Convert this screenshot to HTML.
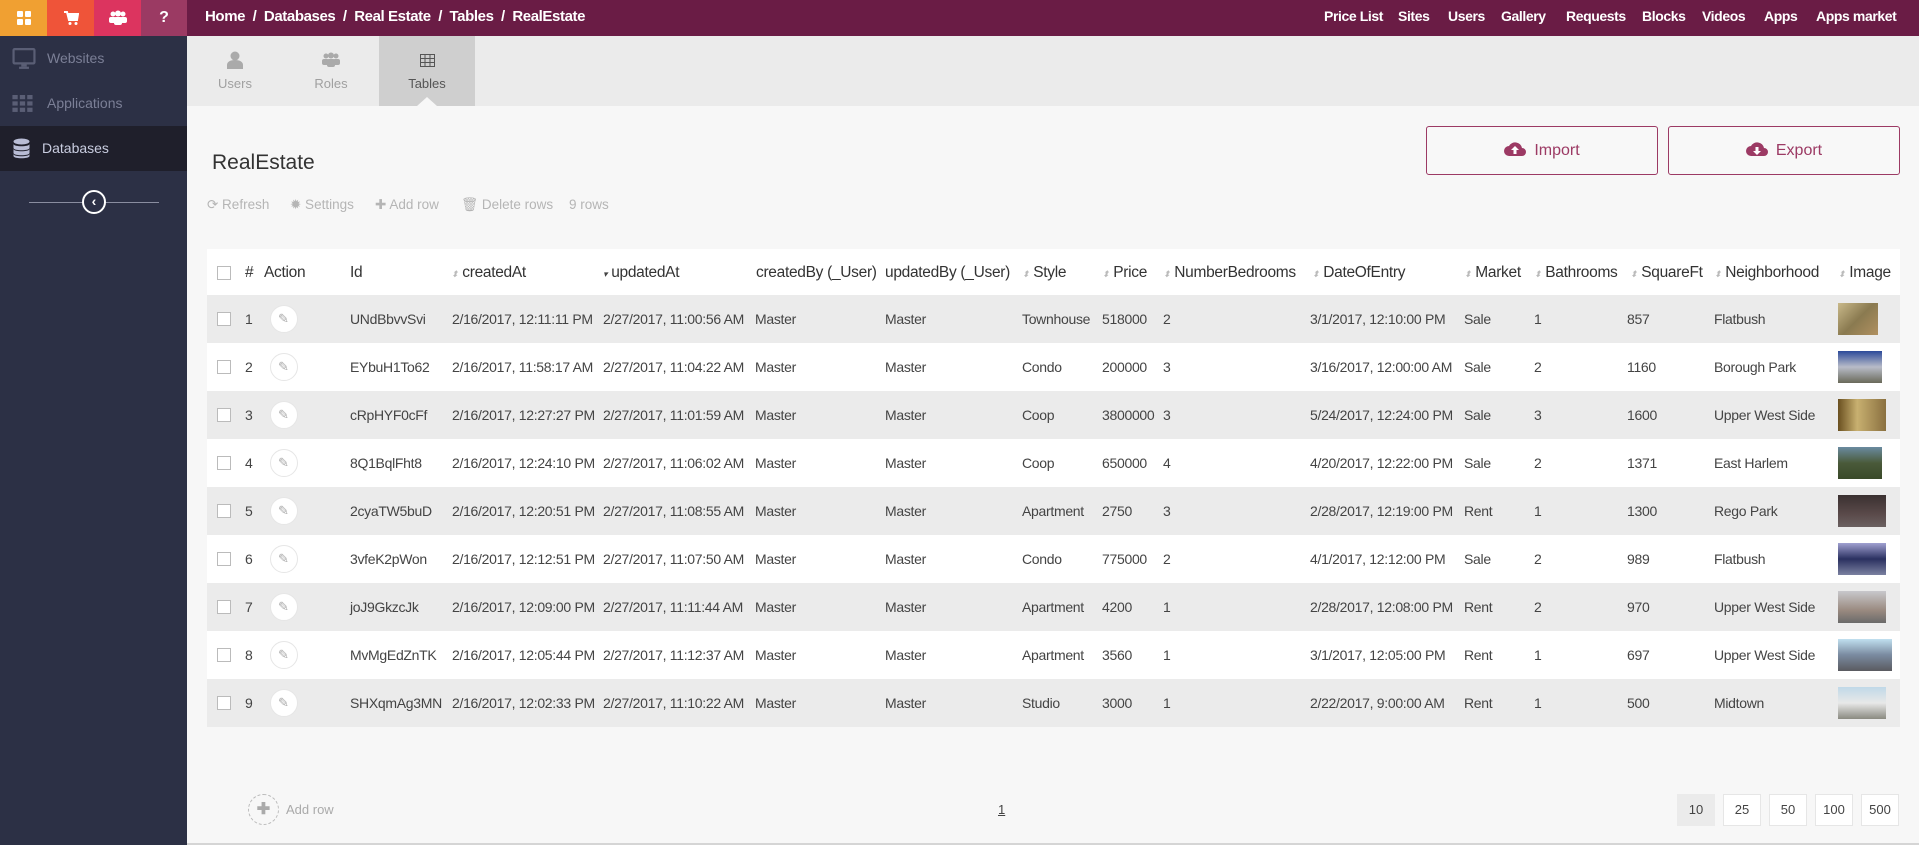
<!DOCTYPE html>
<html><head><meta charset="utf-8"><style>
*{box-sizing:border-box;margin:0;padding:0}
body{width:1919px;height:845px;overflow:hidden;background:#f7f7f7;font-family:"Liberation Sans",sans-serif;color:#444;position:relative}
.abs{position:absolute}
#top{left:0;top:0;width:1919px;height:36px;background:#6a1c45}
.ti{top:0;width:47px;height:36px;color:#fff;font-weight:bold;font-size:16px;text-align:center;line-height:36px}
.nav{top:0;line-height:33px;color:#fff;font-weight:bold;font-size:14px;letter-spacing:-0.4px;white-space:nowrap}
#side{left:0;top:36px;width:187px;height:809px;background:#2c3045}
.si{left:0;width:187px;height:45px;color:#7b7f96;font-size:14px;line-height:45px;padding-left:47px}
#tabs{left:187px;top:36px;width:1732px;height:70px;background:#ebebeb}
.tab{top:36px;width:96px;height:70px;text-align:center;color:#a0a0a0;font-size:13px}
.tab span{position:absolute;left:0;right:0;top:40px}
.row{left:207px;width:1693px;height:48px;font-size:14px;letter-spacing:-0.3px;line-height:48px;color:#444}
.row span{position:absolute;top:0;white-space:nowrap}
.hd span{font-size:15.5px;color:#333}
.cb{width:14px;height:14px;border:1px solid #bbb;background:#fff;top:17px!important}
.ed{width:28px;height:28px;border-radius:50%;background:#fff;top:10px!important;border:1px solid #e6e6e6}
.ed::after{content:"✎";position:absolute;left:7px;top:-11px;color:#aaa;font-size:13px}
.th{width:40px;height:32px;top:8px!important}
.sort{color:#bbb;font-size:9px}
.btn{top:126px;width:232px;height:49px;border:1px solid #9c3a64;border-radius:3px;color:#9c3a64;font-size:16px;text-align:center;line-height:47px;background:#f8f8f8}
.tb{top:197px;font-size:13.5px;color:#b5b5b5;white-space:nowrap}
.pg{top:794px;width:38px;height:32px;background:#fff;border:1px solid #e6e6e6;font-size:13px;text-align:center;line-height:30px;color:#444}
</style></head><body>
<div id="top" class="abs"></div>
<div class="abs ti" style="left:0;background:#f0a032"><svg width="16" height="16" viewBox="0 0 16 16" style="margin-top:10px"><rect x="1" y="1" width="6" height="6" rx="1" fill="#fff"/><rect x="9" y="1" width="6" height="6" rx="1" fill="#fff"/><rect x="1" y="9" width="6" height="6" rx="1" fill="#fff"/><rect x="9" y="9" width="6" height="6" rx="1" fill="#fff"/></svg></div>
<div class="abs ti" style="left:47px;background:#ef5439"><svg width="16" height="16" viewBox="0 0 16 16" style="margin-top:10px"><path d="M1 2h3l2 8h8l1-6H5" stroke="#fff" stroke-width="2" fill="#fff"/><circle cx="7" cy="13.5" r="1.5" fill="#fff"/><circle cx="13" cy="13.5" r="1.5" fill="#fff"/></svg></div>
<div class="abs ti" style="left:94px;background:#dc345f"><svg width="18" height="16" viewBox="0 0 18 16" style="margin-top:10px"><circle cx="4" cy="4" r="2.5" fill="#fff"/><circle cx="9" cy="3.5" r="3" fill="#fff"/><circle cx="14" cy="4" r="2.5" fill="#fff"/><rect x="0" y="7" width="7" height="6" rx="2" fill="#fff"/><rect x="11" y="7" width="7" height="6" rx="2" fill="#fff"/><rect x="5" y="7" width="8" height="8" rx="2" fill="#fff"/></svg></div>
<div class="abs ti" style="left:141px;background:#9b3a63;width:46px">?</div>
<div class="abs nav" style="left:205px;font-size:15px">Home&nbsp; / &nbsp;Databases&nbsp; / &nbsp;Real Estate&nbsp; / &nbsp;Tables&nbsp; / &nbsp;RealEstate</div>
<div class="abs nav" style="left:1324px">Price List</div>
<div class="abs nav" style="left:1398px">Sites</div>
<div class="abs nav" style="left:1448px">Users</div>
<div class="abs nav" style="left:1501px">Gallery</div>
<div class="abs nav" style="left:1566px">Requests</div>
<div class="abs nav" style="left:1642px">Blocks</div>
<div class="abs nav" style="left:1702px">Videos</div>
<div class="abs nav" style="left:1764px">Apps</div>
<div class="abs nav" style="left:1816px">Apps market</div>

<div id="side" class="abs"></div>
<div class="abs si" style="top:36px"><svg class="abs" style="left:12px;top:12px" width="24" height="22" viewBox="0 0 21 20"><rect x="1" y="1" width="19" height="13" rx="1" fill="none" stroke="#5a5e75" stroke-width="2"/><rect x="8" y="14" width="5" height="3" fill="#5a5e75"/><rect x="6" y="17" width="9" height="2" fill="#5a5e75"/></svg>Websites</div>
<div class="abs si" style="top:81px"><svg class="abs" style="left:12px;top:14px" width="22" height="18" viewBox="0 0 20 17"><g fill="#5a5e75"><rect x="0" y="0" width="5" height="4"/><rect x="7" y="0" width="5" height="4"/><rect x="14" y="0" width="5" height="4"/><rect x="0" y="6" width="5" height="4"/><rect x="7" y="6" width="5" height="4"/><rect x="14" y="6" width="5" height="4"/><rect x="0" y="12" width="5" height="4"/><rect x="7" y="12" width="5" height="4"/><rect x="14" y="12" width="5" height="4"/></g></svg>Applications</div>
<div class="abs si" style="top:126px;background:#1f1f2b;color:#c9cde0;padding-left:42px"><svg class="abs" style="left:12px;top:12px" width="19" height="22" viewBox="0 0 18 22"><g fill="#b8bcd5"><ellipse cx="9" cy="3.5" rx="8" ry="3"/><path d="M1 6c0 3 16 3 16 0v4c0 3-16 3-16 0z"/><path d="M1 11c0 3 16 3 16 0v4c0 3-16 3-16 0z"/><path d="M1 16c0 3 16 3 16 0v2c0 3-16 3-16 0z"/></g></svg>Databases</div>
<div class="abs" style="left:29px;top:202px;width:130px;height:1px;background:#8a8da0"></div>
<div class="abs" style="left:82px;top:190px;width:24px;height:24px;border-radius:50%;border:2px solid #fff;background:#2c3045;color:#fff;font-size:14px;font-weight:bold;text-align:center;line-height:19px">‹</div>

<div id="tabs" class="abs"></div>
<div class="abs tab" style="left:187px"><svg class="abs" style="left:40px;top:15px" width="16" height="18" viewBox="0 0 16 18"><circle cx="8" cy="5" r="4.5" fill="#aaa"/><path d="M0 18v-4c0-3 3-5 8-5s8 2 8 5v4z" fill="#aaa"/></svg><span>Users</span></div>
<div class="abs tab" style="left:283px"><svg class="abs" style="left:39px;top:15px" width="18" height="18" viewBox="0 0 18 16"><circle cx="4" cy="4" r="2.5" fill="#aaa"/><circle cx="9" cy="3.5" r="3" fill="#aaa"/><circle cx="14" cy="4" r="2.5" fill="#aaa"/><rect x="0" y="7" width="7" height="6" rx="2" fill="#aaa"/><rect x="11" y="7" width="7" height="6" rx="2" fill="#aaa"/><rect x="5" y="7" width="8" height="8" rx="2" fill="#aaa"/></svg><span>Roles</span></div>
<div class="abs tab" style="left:379px;background:#cfcfcf;color:#555"><svg class="abs" style="left:41px;top:18px" width="15" height="13" viewBox="0 0 15 13"><rect x="0.5" y="0.5" width="14" height="12" fill="none" stroke="#555"/><path d="M0.5 4.5h14M0.5 8.5h14M5 0.5v12M10 0.5v12" stroke="#555"/></svg><span>Tables</span></div>
<div class="abs" style="left:417px;top:97px;width:0;height:0;border-left:10px solid transparent;border-right:10px solid transparent;border-bottom:9px solid #f7f7f7"></div>

<div class="abs" style="left:212px;top:151px;font-size:21px;color:#333">RealEstate</div>
<div class="abs btn" style="left:1426px"><svg width="22" height="17" viewBox="0 0 22 17" style="vertical-align:-2px;margin-right:8px"><path d="M5 16a5 5 0 0 1 0-10 7 7 0 0 1 13 2 4 4 0 0 1 0 8z" fill="#9c3a64"/><path d="M11 6l-4 4h2.5v4h3v-4H15z" fill="#fff"/></svg>Import</div>
<div class="abs btn" style="left:1668px"><svg width="22" height="17" viewBox="0 0 22 17" style="vertical-align:-2px;margin-right:8px"><path d="M5 16a5 5 0 0 1 0-10 7 7 0 0 1 13 2 4 4 0 0 1 0 8z" fill="#9c3a64"/><path d="M11 15l-4-4h2.5V7h3v4H15z" fill="#fff"/></svg>Export</div>

<div class="abs tb" style="left:207px">⟳ Refresh</div>
<div class="abs tb" style="left:290px">✹ Settings</div>
<div class="abs tb" style="left:375px">✚ Add row</div>
<div class="abs tb" style="left:461px">🗑 Delete rows</div>
<div class="abs tb" style="left:569px">9 rows</div>

<div class="abs" style="left:207px;top:251px;width:1693px;height:475px;background:#fff"></div>
<div class="abs row hd" style="top:249px;background:#fff">
<span class="cb" style="left:10px"></span><span style="left:38px">#</span><span style="left:57px">Action</span><span style="left:143px">Id</span>
<span style="left:244px"><i class="sort">⬍</i> createdAt</span><span style="left:396px"><i class="sort" style="color:#444">▾</i> updatedAt</span>
<span style="left:549px">createdBy (_User)</span><span style="left:678px">updatedBy (_User)</span>
<span style="left:815px"><i class="sort">⬍</i> Style</span><span style="left:895px"><i class="sort">⬍</i> Price</span><span style="left:956px"><i class="sort">⬍</i> NumberBedrooms</span>
<span style="left:1105px"><i class="sort">⬍</i> DateOfEntry</span><span style="left:1257px"><i class="sort">⬍</i> Market</span><span style="left:1327px"><i class="sort">⬍</i> Bathrooms</span>
<span style="left:1423px"><i class="sort">⬍</i> SquareFt</span><span style="left:1507px"><i class="sort">⬍</i> Neighborhood</span><span style="left:1631px"><i class="sort">⬍</i> Image</span>
</div>

<div class="abs row" style="top:295px;background:#ebebeb"><span class="cb" style="left:10px"></span><span style="left:38px">1</span><span class="ed" style="left:63px"></span><span style="left:143px">UNdBbvvSvi</span><span style="left:245px">2/16/2017, 12:11:11 PM</span><span style="left:396px">2/27/2017, 11:00:56 AM</span><span style="left:548px">Master</span><span style="left:678px">Master</span><span style="left:815px">Townhouse</span><span style="left:895px">518000</span><span style="left:956px">2</span><span style="left:1103px">3/1/2017, 12:10:00 PM</span><span style="left:1257px">Sale</span><span style="left:1327px">1</span><span style="left:1420px">857</span><span style="left:1507px">Flatbush</span><span class="th" style="left:1631px;background:linear-gradient(135deg,#c9b98a,#8a7a50 50%,#b09060)"></span></div>
<div class="abs row" style="top:343px;background:#fff"><span class="cb" style="left:10px"></span><span style="left:38px">2</span><span class="ed" style="left:63px"></span><span style="left:143px">EYbuH1To62</span><span style="left:245px">2/16/2017, 11:58:17 AM</span><span style="left:396px">2/27/2017, 11:04:22 AM</span><span style="left:548px">Master</span><span style="left:678px">Master</span><span style="left:815px">Condo</span><span style="left:895px">200000</span><span style="left:956px">3</span><span style="left:1103px">3/16/2017, 12:00:00 AM</span><span style="left:1257px">Sale</span><span style="left:1327px">2</span><span style="left:1420px">1160</span><span style="left:1507px">Borough Park</span><span class="th" style="left:1631px;width:44px;background:linear-gradient(180deg,#2c4a9a,#b8bcc8 50%,#6a6a5a)"></span></div>
<div class="abs row" style="top:391px;background:#ebebeb"><span class="cb" style="left:10px"></span><span style="left:38px">3</span><span class="ed" style="left:63px"></span><span style="left:143px">cRpHYF0cFf</span><span style="left:245px">2/16/2017, 12:27:27 PM</span><span style="left:396px">2/27/2017, 11:01:59 AM</span><span style="left:548px">Master</span><span style="left:678px">Master</span><span style="left:815px">Coop</span><span style="left:895px">3800000</span><span style="left:956px">3</span><span style="left:1103px">5/24/2017, 12:24:00 PM</span><span style="left:1257px">Sale</span><span style="left:1327px">3</span><span style="left:1420px">1600</span><span style="left:1507px">Upper West Side</span><span class="th" style="left:1631px;width:48px;background:linear-gradient(90deg,#6a5020,#c8b070 40%,#8a7040)"></span></div>
<div class="abs row" style="top:439px;background:#fff"><span class="cb" style="left:10px"></span><span style="left:38px">4</span><span class="ed" style="left:63px"></span><span style="left:143px">8Q1BqlFht8</span><span style="left:245px">2/16/2017, 12:24:10 PM</span><span style="left:396px">2/27/2017, 11:06:02 AM</span><span style="left:548px">Master</span><span style="left:678px">Master</span><span style="left:815px">Coop</span><span style="left:895px">650000</span><span style="left:956px">4</span><span style="left:1103px">4/20/2017, 12:22:00 PM</span><span style="left:1257px">Sale</span><span style="left:1327px">2</span><span style="left:1420px">1371</span><span style="left:1507px">East Harlem</span><span class="th" style="left:1631px;width:44px;background:linear-gradient(180deg,#6a8aa0,#4a5a3a 50%,#3a4a2a)"></span></div>
<div class="abs row" style="top:487px;background:#ebebeb"><span class="cb" style="left:10px"></span><span style="left:38px">5</span><span class="ed" style="left:63px"></span><span style="left:143px">2cyaTW5buD</span><span style="left:245px">2/16/2017, 12:20:51 PM</span><span style="left:396px">2/27/2017, 11:08:55 AM</span><span style="left:548px">Master</span><span style="left:678px">Master</span><span style="left:815px">Apartment</span><span style="left:895px">2750</span><span style="left:956px">3</span><span style="left:1103px">2/28/2017, 12:19:00 PM</span><span style="left:1257px">Rent</span><span style="left:1327px">1</span><span style="left:1420px">1300</span><span style="left:1507px">Rego Park</span><span class="th" style="left:1631px;width:48px;background:linear-gradient(180deg,#3a3030,#5a4a4a 60%,#6a6060)"></span></div>
<div class="abs row" style="top:535px;background:#fff"><span class="cb" style="left:10px"></span><span style="left:38px">6</span><span class="ed" style="left:63px"></span><span style="left:143px">3vfeK2pWon</span><span style="left:245px">2/16/2017, 12:12:51 PM</span><span style="left:396px">2/27/2017, 11:07:50 AM</span><span style="left:548px">Master</span><span style="left:678px">Master</span><span style="left:815px">Condo</span><span style="left:895px">775000</span><span style="left:956px">2</span><span style="left:1103px">4/1/2017, 12:12:00 PM</span><span style="left:1257px">Sale</span><span style="left:1327px">2</span><span style="left:1420px">989</span><span style="left:1507px">Flatbush</span><span class="th" style="left:1631px;width:48px;background:linear-gradient(180deg,#a0a0d0,#2a3060 50%,#7a80a0)"></span></div>
<div class="abs row" style="top:583px;background:#ebebeb"><span class="cb" style="left:10px"></span><span style="left:38px">7</span><span class="ed" style="left:63px"></span><span style="left:143px">joJ9GkzcJk</span><span style="left:245px">2/16/2017, 12:09:00 PM</span><span style="left:396px">2/27/2017, 11:11:44 AM</span><span style="left:548px">Master</span><span style="left:678px">Master</span><span style="left:815px">Apartment</span><span style="left:895px">4200</span><span style="left:956px">1</span><span style="left:1103px">2/28/2017, 12:08:00 PM</span><span style="left:1257px">Rent</span><span style="left:1327px">2</span><span style="left:1420px">970</span><span style="left:1507px">Upper West Side</span><span class="th" style="left:1631px;width:48px;background:linear-gradient(180deg,#c8c8cc,#9a8a80 60%,#6a6a6a)"></span></div>
<div class="abs row" style="top:631px;background:#fff"><span class="cb" style="left:10px"></span><span style="left:38px">8</span><span class="ed" style="left:63px"></span><span style="left:143px">MvMgEdZnTK</span><span style="left:245px">2/16/2017, 12:05:44 PM</span><span style="left:396px">2/27/2017, 11:12:37 AM</span><span style="left:548px">Master</span><span style="left:678px">Master</span><span style="left:815px">Apartment</span><span style="left:895px">3560</span><span style="left:956px">1</span><span style="left:1103px">3/1/2017, 12:05:00 PM</span><span style="left:1257px">Rent</span><span style="left:1327px">1</span><span style="left:1420px">697</span><span style="left:1507px">Upper West Side</span><span class="th" style="left:1631px;width:54px;background:linear-gradient(180deg,#c0e0f0,#7a8aa0 50%,#5a5a60)"></span></div>
<div class="abs row" style="top:679px;background:#ebebeb"><span class="cb" style="left:10px"></span><span style="left:38px">9</span><span class="ed" style="left:63px"></span><span style="left:143px">SHXqmAg3MN</span><span style="left:245px">2/16/2017, 12:02:33 PM</span><span style="left:396px">2/27/2017, 11:10:22 AM</span><span style="left:548px">Master</span><span style="left:678px">Master</span><span style="left:815px">Studio</span><span style="left:895px">3000</span><span style="left:956px">1</span><span style="left:1103px">2/22/2017, 9:00:00 AM</span><span style="left:1257px">Rent</span><span style="left:1327px">1</span><span style="left:1420px">500</span><span style="left:1507px">Midtown</span><span class="th" style="left:1631px;width:48px;background:linear-gradient(180deg,#c0d8e8,#e8e8e8 50%,#8a8a80)"></span></div>

<div class="abs" style="left:248px;top:794px;width:31px;height:31px;border-radius:50%;border:1px dashed #bbb;color:#aaa;text-align:center;line-height:29px;font-size:16px;font-weight:bold">✚</div>
<div class="abs" style="left:286px;top:802px;font-size:13px;color:#aaa">Add row</div>
<div class="abs" style="left:998px;top:802px;font-size:13px;text-decoration:underline;color:#444">1</div>
<div class="abs pg" style="left:1677px;background:#ebebeb;border-color:#ebebeb">10</div>
<div class="abs pg" style="left:1723px">25</div>
<div class="abs pg" style="left:1769px">50</div>
<div class="abs pg" style="left:1815px">100</div>
<div class="abs pg" style="left:1861px">500</div>
<div class="abs" style="left:187px;top:843px;width:1732px;height:2px;background:#d5d5d5"></div>
</body></html>
